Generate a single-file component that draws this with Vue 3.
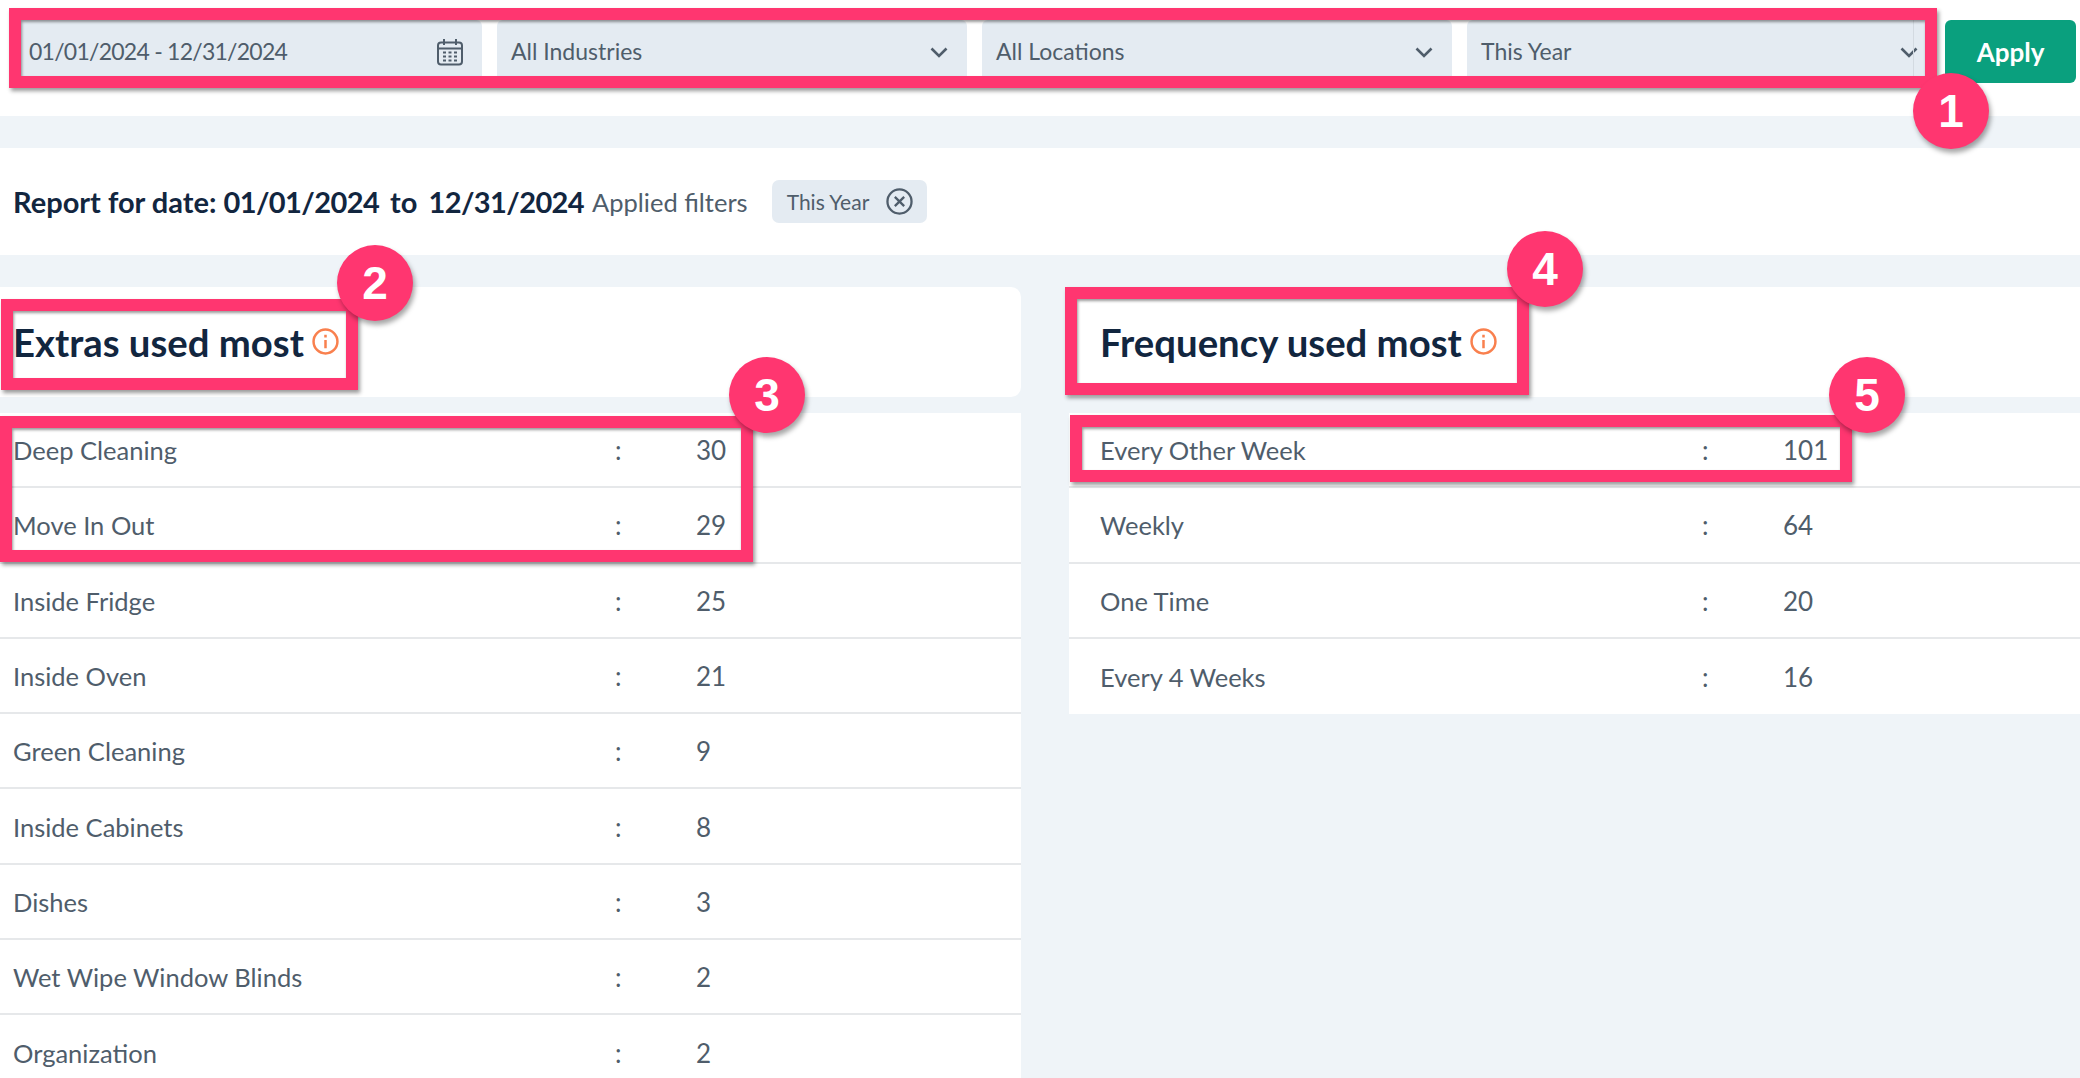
<script setup>
const filters = ['All Industries', 'All Locations', 'This Year']
const extras = [
  ['Deep Cleaning', 30], ['Move In Out', 29], ['Inside Fridge', 25], ['Inside Oven', 21],
  ['Green Cleaning', 9], ['Inside Cabinets', 8], ['Dishes', 3], ['Wet Wipe Window Blinds', 2], ['Organization', 2]
]
const frequency = [['Every Other Week', 101], ['Weekly', 64], ['One Time', 20], ['Every 4 Weeks', 16]]
const frames = [
  { x: 9, y: 8, w: 1928, h: 80 },
  { x: 1, y: 299, w: 357, h: 91 },
  { x: 0, y: 416, w: 753, h: 146 },
  { x: 1065, y: 287, w: 464, h: 108 },
  { x: 1070, y: 415, w: 782, h: 67 }
]
const badges = [
  { n: 1, x: 1951, y: 111 }, { n: 2, x: 375, y: 283 }, { n: 3, x: 767, y: 395 },
  { n: 4, x: 1545, y: 269 }, { n: 5, x: 1867, y: 395 }
]
</script>

<template>
  <div class="page">
    <header class="toolbar">
      <div class="field date">
        <span class="value">01/01/2024 - 12/31/2024</span>
        <svg class="cal" width="28" height="28" viewBox="0 0 28 28" fill="none" stroke="currentColor" stroke-width="2">
          <rect x="2" y="4.5" width="24" height="22" rx="3" />
          <path d="M2 10.5h24M8 1v6M20 1v6" />
          <path d="M7 14.5h3M12.5 14.5h3M18 14.5h3M7 18.5h3M12.5 18.5h3M18 18.5h3M7 22.5h3M12.5 22.5h3M18 22.5h3" />
        </svg>
      </div>
      <div v-for="f in filters" :key="f" class="field">
        <span class="value">{{ f }}</span>
        <svg class="chev" width="18" height="11" viewBox="0 0 18 11" fill="none" stroke="currentColor" stroke-width="2.6">
          <path d="M1.5 1.5 9 9l7.5-7.5" />
        </svg>
      </div>
      <button class="apply">Apply</button>
    </header>

    <section class="report">
      <strong class="range">Report for date: <span class="day">01/01/2024</span><span class="to">to</span><span class="day">12/31/2024</span></strong>
      <span class="applied">Applied filters</span>
      <span class="chip">
        This Year
        <svg width="27" height="27" viewBox="0 0 26 26" fill="none" stroke="currentColor" stroke-width="2.2">
          <circle cx="13" cy="13" r="11.6" />
          <path d="m8.5 8.5 9 9M17.5 8.5l-9 9" />
        </svg>
      </span>
    </section>

    <main class="panels">
      <section class="panel">
        <div class="title">
          <h2>Extras used most</h2>
          <svg class="info" width="27" height="27" viewBox="0 0 26 26" fill="none" stroke="currentColor" stroke-width="2.4">
            <circle cx="13" cy="13" r="11.5" />
            <path d="M13 11.5v8M13 6.5v2.6" />
          </svg>
        </div>
        <ul class="rows">
          <li v-for="r in extras" :key="r[0]" class="row">
            <span class="label">{{ r[0] }}</span><span>:</span><span>{{ r[1] }}</span>
          </li>
        </ul>
      </section>
      <section class="panel right">
        <div class="title">
          <h2>Frequency used most</h2>
          <svg class="info" width="27" height="27" viewBox="0 0 26 26" fill="none" stroke="currentColor" stroke-width="2.4">
            <circle cx="13" cy="13" r="11.5" />
            <path d="M13 11.5v8M13 6.5v2.6" />
          </svg>
        </div>
        <ul class="rows">
          <li v-for="r in frequency" :key="r[0]" class="row">
            <span class="label">{{ r[0] }}</span><span>:</span><span>{{ r[1] }}</span>
          </li>
        </ul>
      </section>
    </main>

    <div
      v-for="(f, i) in frames"
      :key="i"
      class="frame"
      :style="{ left: f.x + 'px', top: f.y + 'px', width: f.w + 'px', height: f.h + 'px' }"
    ></div>
    <div
      v-for="b in badges"
      :key="b.n"
      class="badge"
      :style="{ left: b.x - 38 + 'px', top: b.y - 38 + 'px' }"
    >{{ b.n }}</div>
  </div>
</template>

<style>
html, body { margin: 0; background: #fff; overflow: hidden; }
</style>

<style scoped>
.page {
  position: relative;
  width: 2080px;
  height: 1078px;
  overflow: hidden;
  background: #eff4f8;
  font-family: Lato, "Liberation Sans", sans-serif;
  color: #4f5d6b;
}
.toolbar {
  display: flex;
  gap: 15px;
  align-items: flex-start;
  box-sizing: border-box;
  height: 116px;
  padding: 20px 4px 0 12px;
  background: #fff;
}
.field {
  position: relative;
  flex: 0 0 470px;
  box-sizing: border-box;
  height: 63px;
  display: flex;
  align-items: center;
  justify-content: space-between;
  padding: 0 19px 0 14px;
  background: #e4ebf2;
  border-radius: 6px;
  font-size: 23px;
}
.value { margin-top: -2px; }
.chev { margin-top: 2px; }
.field:nth-child(4)::after {
  content: "";
  position: absolute;
  top: 0;
  bottom: 0;
  left: 446px;
  width: 1px;
  background: #d3dae1;
}
.field.date { padding: 0 18px 0 17px; letter-spacing: -0.75px; }
.apply {
  flex: 0 0 131px;
  height: 63px;
  margin-left: -7px;
  border: 0;
  border-radius: 6px;
  background: #0aa07e;
  color: #fff;
  font: 700 26px Lato, sans-serif;
}
.report {
  display: flex;
  align-items: center;
  height: 107px;
  margin-top: 32px;
  padding-left: 13px;
  background: #fff;
}
.range { font-size: 29px; color: #12263f; }
.day { letter-spacing: -0.6px; }
.to { margin: 0 11px; }
.applied { margin-left: 8px; font-size: 25.5px; }
.chip {
  display: flex;
  align-items: center;
  gap: 17px;
  box-sizing: border-box;
  height: 43px;
  margin-left: 24px;
  padding: 0 14px 0 15px;
  border-radius: 7px;
  background: #e4ebf2;
  font-size: 21px;
}
.panels {
  display: grid;
  grid-template-columns: 1021px 1011px;
  column-gap: 48px;
  padding-top: 32px;
}
.title {
  display: flex;
  align-items: center;
  gap: 8px;
  box-sizing: border-box;
  height: 110px;
  padding-left: 13px;
  background: #fff;
  border-radius: 0 10px 10px 0;
}
.right .title { padding-left: 31px; border-radius: 0; }
h2 {
  margin: 0;
  font-size: 38.3px;
  font-weight: 700;
  color: #12263f;
}
.info { color: #f9804e; margin-top: -2px; }
.rows { list-style: none; margin: 16px 0 0; padding: 0; background: #fff; }
.row {
  display: grid;
  grid-template-columns: 602px 81px auto;
  align-items: center;
  box-sizing: border-box;
  height: 75.3px;
  padding: 1px 0 0 13px;
  border-bottom: 2px solid #e6e8ea;
  font-size: 26px;
}
.label { font-size: 25.5px; }
.right .row { padding-left: 31px; }
.right .row:last-child { border-bottom: 0; }
.frame {
  position: absolute;
  box-sizing: border-box;
  border: 12px solid #ff3670;
  box-shadow: 2px 3px 4px rgba(0, 0, 0, 0.4), inset 1px 2px 3px rgba(0, 0, 0, 0.4);
}
.badge {
  position: absolute;
  width: 76px;
  height: 76px;
  border-radius: 50%;
  background: #ff3670;
  box-shadow: 2px 4px 5px rgba(0, 0, 0, 0.35);
  color: #fff;
  font: 700 46px/76px "Liberation Sans", sans-serif;
  text-align: center;
}
</style>
